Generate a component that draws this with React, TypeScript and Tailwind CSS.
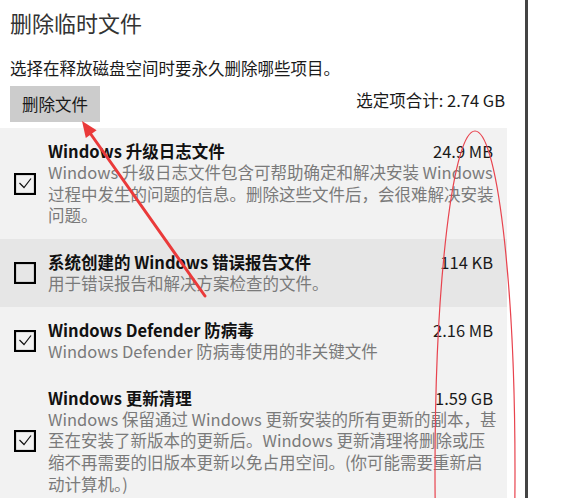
import React from "react";

const FONT = { fontFamily: '"Noto Sans CJK SC", "Noto Sans", sans-serif' };

function Check({ checked }: { checked: boolean }) {
  return (
    <svg width="22" height="22" viewBox="0 0 22 22" className="block">
      <rect x="1" y="1" width="20" height="20" fill="none" stroke="#000" strokeWidth="2.2" />
      {checked && (
        <polyline points="5.5,10 10,14.5 17,5.5" fill="none" stroke="#111" strokeWidth="1.2" />
      )}
    </svg>
  );
}

type Item = { title: string; size: string; lines: string[]; checked: boolean; hover?: boolean };

const items: Item[] = [
  {
    title: "Windows 升级日志文件",
    size: "24.9 MB",
    checked: true,
    lines: [
      "Windows 升级日志文件包含可帮助确定和解决安装 Windows",
      "过程中发生的问题的信息。删除这些文件后，会很难解决安装",
      "问题。",
    ],
  },
  {
    title: "系统创建的 Windows 错误报告文件",
    size: "114 KB",
    checked: false,
    hover: true,
    lines: ["用于错误报告和解决方案检查的文件。"],
  },
  {
    title: "Windows Defender 防病毒",
    size: "2.16 MB",
    checked: true,
    lines: ["Windows Defender 防病毒使用的非关键文件"],
  },
  {
    title: "Windows 更新清理",
    size: "1.59 GB",
    checked: true,
    lines: [
      "Windows 保留通过 Windows 更新安装的所有更新的副本，甚",
      "至在安装了新版本的更新后。Windows 更新清理将删除或压",
      "缩不再需要的旧版本更新以免占用空间。(你可能需要重新启",
      "动计算机。)",
    ],
  },
];

export default function App() {
  return (
    <div className="relative h-[498px] overflow-hidden bg-white" style={FONT}>
      <div className="flex h-full">
        <div className="w-[507px] shrink-0">
          <div className="pl-[10px] pr-[2px] pt-[8px]">
            <div className="text-[22px] leading-[28px] text-[#333]">删除临时文件</div>
            <div className="mt-[21px] text-[16.5px] leading-[22px] text-[#1a1a1a]">
              选择在释放磁盘空间时要永久删除哪些项目。
            </div>
            <div className="mt-[7px] flex items-start justify-between">
              <div className="flex h-[36px] w-[90px] items-center justify-center bg-[#cccccc] text-[16.5px] text-[#1a1a1a]">
                删除文件
              </div>
              <div className="mt-[3px] text-[16.5px] leading-[22px] text-[#1a1a1a]">
                选定项合计: 2.74 GB
              </div>
            </div>
          </div>
          <div className="mt-[6px]">
            {items.map((it) => (
              <div
                key={it.title}
                className={
                  "flex items-center py-[12px] " + (it.hover ? "bg-[#e6e6e6]" : "bg-[#f2f2f2]")
                }
              >
                <div className="ml-[14px] mr-[12px] shrink-0">
                  <Check checked={it.checked} />
                </div>
                <div className="min-w-0 flex-1 pr-[14px] text-[16.5px]">
                  <div className="flex justify-between leading-[22px]">
                    <span className="font-bold text-[#111]">{it.title}</span>
                    <span className="text-[#1a1a1a]">{it.size}</span>
                  </div>
                  <div className="leading-[21.7px] text-[#7a7a7a]">
                    {it.lines.map((l) => (
                      <div key={l} className="whitespace-nowrap">
                        {l}
                      </div>
                    ))}
                  </div>
                </div>
              </div>
            ))}
          </div>
        </div>
        <div className="ml-[18px] w-[3px] bg-[#444]" />
      </div>
      <svg
        className="pointer-events-none absolute left-0 top-0"
        width="570"
        height="498"
        viewBox="0 0 570 498"
      >
        <ellipse cx="475" cy="470" rx="40" ry="339" fill="none" stroke="#e8434e" strokeWidth="1.2" />
        <line x1="205" y1="296" x2="90" y2="133" stroke="#ea3a3a" strokeWidth="3" strokeLinecap="round" />
        <polygon points="82,121 85.8,138 96.6,130.3" fill="#ea3a3a" />
      </svg>
    </div>
  );
}
